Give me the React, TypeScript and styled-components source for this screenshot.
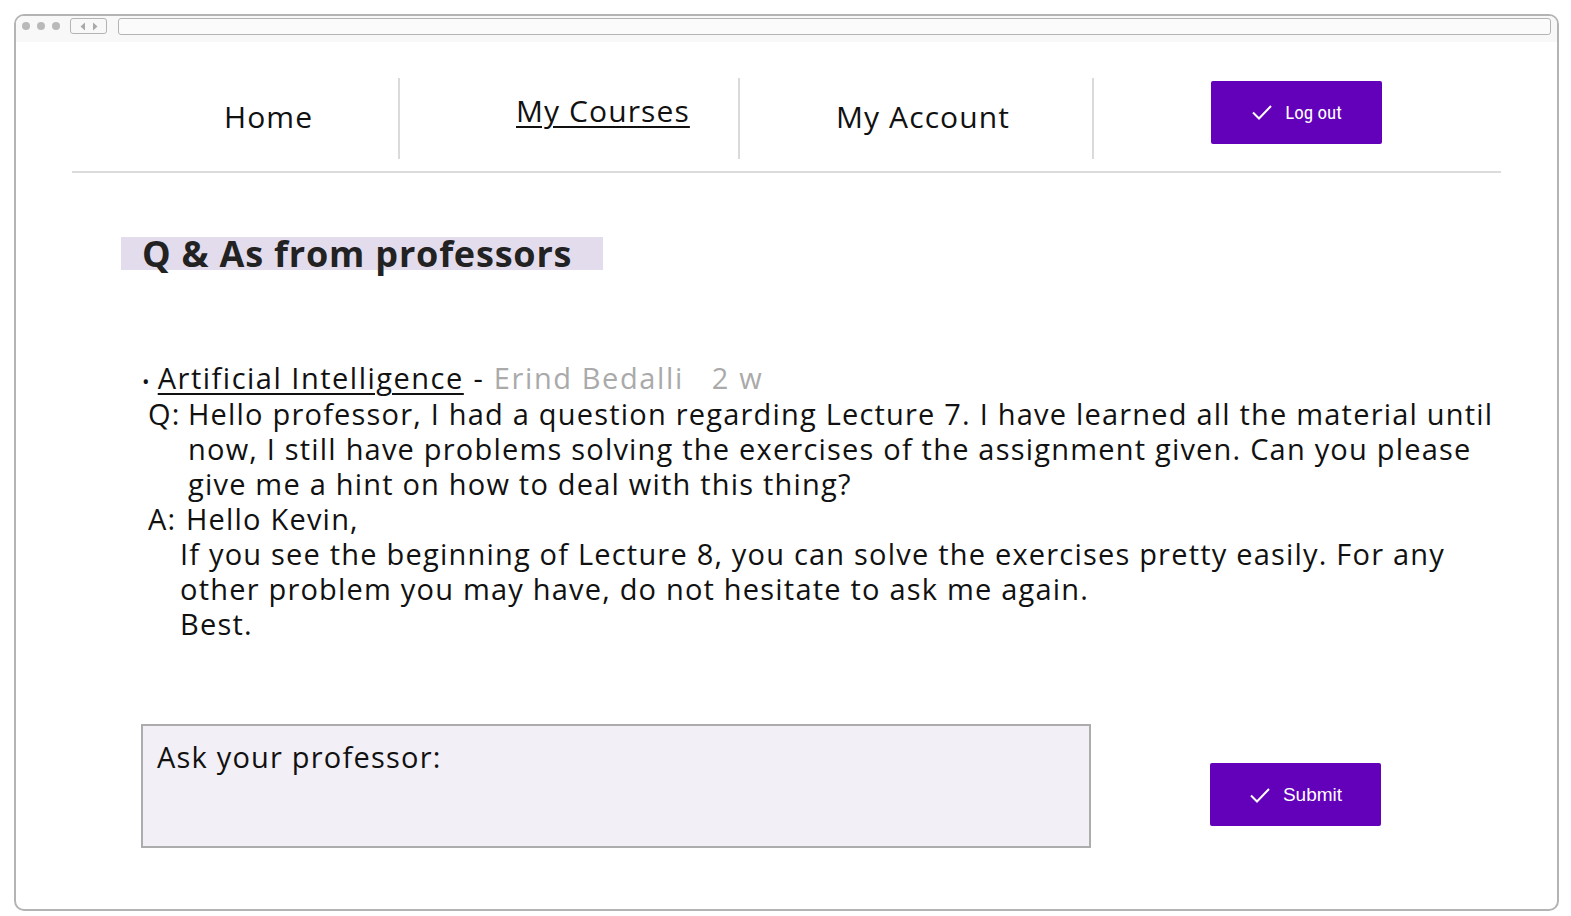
import React from "react";
import styled, { createGlobalStyle } from "styled-components";

const Global = createGlobalStyle`
  html, body { margin: 0; padding: 0; background: #ffffff; }
  body { font-family: "Open Sans", "Noto Sans", sans-serif; color: #111; }
  * { box-sizing: border-box; }
`;

const Frame = styled.div`
  margin: 14px 0 0 14px;
  width: 1545px;
  height: 897px;
  border: 2px solid #b4b4b4;
  border-radius: 10px;
  overflow: hidden;
  display: flex;
  flex-direction: column;
`;

const TopBar = styled.div`
  height: 26px;
  background: #f8f8f8;
  display: flex;
  align-items: center;
  padding: 0 6px 6px 6px;
`;

const Dots = styled.div`
  display: flex;
  gap: 7px;
  margin-right: 10px;
`;

const Dot = styled.span`
  width: 8px;
  height: 8px;
  border-radius: 50%;
  background: #b9b9b9;
`;

const NavArrows = styled.div`
  width: 37px;
  height: 16px;
  border: 1.5px solid #b4b4b4;
  border-radius: 3px;
  display: flex;
  align-items: center;
  justify-content: center;
  gap: 6px;
  margin-right: 11px;
`;

const AddressBar = styled.div`
  flex: 1;
  height: 17px;
  border: 1.5px solid #b4b4b4;
  border-radius: 3px;
  background: #fbfbfb;
`;

const Content = styled.div`
  flex: 1;
  padding: 0 56px;
  display: flex;
  flex-direction: column;
`;

const Nav = styled.nav`
  display: flex;
  height: 131px;
  padding-top: 36px;
  border-bottom: 2px solid #dcdcdc;
`;

const NavItem = styled.div<{ $w: number; $pl: number; $divider?: boolean }>`
  width: ${(p) => p.$w}px;
  height: 81px;
  display: flex;
  align-items: center;
  padding-left: ${(p) => p.$pl}px;
  border-right: ${(p) => (p.$divider ? "2px solid #dadada" : "none")};
`;

const NavLink = styled.a<{ $active?: boolean; $dy?: number }>`
  font-family: "Open Sans", sans-serif;
  font-size: 30px;
  font-weight: 500;
  letter-spacing: 1.1px;
  color: #111;
  text-decoration: ${(p) => (p.$active ? "underline" : "none")};
  text-underline-offset: 4px;
  text-decoration-thickness: 2px;
  position: relative;
  top: ${(p) => p.$dy ?? 0}px;
`;

const PurpleButton = styled.button<{ $font?: string }>`
  width: 171px;
  height: 63px;
  background: #6200ba;
  color: #fff;
  border: none;
  border-radius: 2px;
  display: flex;
  align-items: center;
  justify-content: center;
  gap: 12px;
  font-family: ${(p) => p.$font ?? '"Liberation Sans", sans-serif'};
  font-size: 19px;
  cursor: pointer;
`;

const HeadingRow = styled.div`
  margin-top: 64px;
  padding-left: 49px;
`;

const Heading = styled.h1`
  display: inline-block;
  margin: 0;
  width: 482px;
  height: 33px;
  background: #e3dcec;
  padding-left: 21px;
  font-family: "Open Sans", sans-serif;
  font-weight: 700;
  font-size: 36px;
  letter-spacing: 0.8px;
  line-height: 33px;
  color: #222;
  white-space: nowrap;
`;

const Post = styled.div`
  margin-top: 88px;
  padding-left: 70px;
  font-size: 29px;
  line-height: 35px;
  font-weight: 500;
  letter-spacing: 1.2px;
  white-space: nowrap;
`;

const MetaLine = styled.div`
  display: flex;
  align-items: baseline;
  height: 36px;
`;

const Bullet = styled.span`
  font-size: 20px;
  line-height: 1;
  margin-right: 7px;
`;

const Course = styled.a`
  color: #111;
  text-decoration: underline;
  text-underline-offset: 4px;
  text-decoration-thickness: 2px;
  letter-spacing: 1.5px;
`;

const Muted = styled.span<{ $ml?: number }>`
  color: #aaaaaa;
  margin-left: ${(p) => p.$ml ?? 0}px;
  letter-spacing: 1.6px;
`;

const Dash = styled.span`
  margin: 0 1px;
`;

const QA = styled.div`
  display: flex;
  padding-left: 6px;
`;

const Label = styled.span<{ $w: number }>`
  flex: none;
  width: ${(p) => p.$w}px;
`;

const Body = styled.div`
  flex: 1;
`;

const AnswerBody = styled.div`
  padding-left: 38px;
`;

const AskRow = styled.div`
  margin-top: 83px;
  padding-left: 69px;
  display: flex;
  align-items: center;
`;

const AskBox = styled.div`
  width: 950px;
  height: 124px;
  background: #f2eff6;
  border: 2px solid #acacac;
  padding: 11px 14px;
  font-size: 29px;
  font-weight: 500;
  letter-spacing: 1.2px;
`;

const SubmitWrap = styled.div`
  margin-left: 119px;
  margin-top: 17px;
`;

const Check = () => (
  <svg width="22" height="18" viewBox="0 0 22 18" fill="none">
    <path d="M2 9.5 L8 15.5 L20 3" stroke="#fff" strokeWidth="2" />
  </svg>
);

const Arrow = ({ dir }: { dir: "l" | "r" }) => (
  <svg width="6" height="9" viewBox="0 0 6 9">
    {dir === "l" ? <path d="M5 0.5 L0.5 4.5 L5 8.5 Z" fill="#a9a9a9" /> : <path d="M1 0.5 L5.5 4.5 L1 8.5 Z" fill="#a9a9a9" />}
  </svg>
);

export default function App() {
  return (
    <>
      <Global />
      <Frame>
        <TopBar>
          <Dots>
            <Dot />
            <Dot />
            <Dot />
          </Dots>
          <NavArrows>
            <Arrow dir="l" />
            <Arrow dir="r" />
          </NavArrows>
          <AddressBar />
        </TopBar>
        <Content>
          <Nav>
            <NavItem $w={328} $pl={152} $divider>
              <NavLink $dy={-2}>Home</NavLink>
            </NavItem>
            <NavItem $w={340} $pl={116} $divider>
              <NavLink $active $dy={-8}>My Courses</NavLink>
            </NavItem>
            <NavItem $w={354} $pl={96} $divider>
              <NavLink $dy={-2}>My Account</NavLink>
            </NavItem>
            <NavItem $w={403} $pl={117}>
              <PurpleButton $font='"Roboto Condensed", "Roboto", sans-serif' style={{ marginTop: -13 }}>
                <Check />
                Log out
              </PurpleButton>
            </NavItem>
          </Nav>
          <HeadingRow>
            <Heading>Q &amp; As from professors</Heading>
          </HeadingRow>
          <Post>
            <MetaLine>
              <Bullet>•</Bullet>
              <Course>Artificial Intelligence</Course>
              <Dash>&nbsp;-&nbsp;</Dash>
              <Muted>Erind Bedalli</Muted>
              <Muted $ml={28}>2 w</Muted>
            </MetaLine>
            <QA>
              <Label $w={40}>Q:</Label>
              <Body>
                Hello professor, I had a question regarding Lecture 7. I have learned all the material until
                <br />
                now, I still have problems solving the exercises of the assignment given. Can you please
                <br />
                give me a hint on how to deal with this thing?
              </Body>
            </QA>
            <QA>
              <Label $w={38}>A:</Label>
              <Body>Hello Kevin,</Body>
            </QA>
            <AnswerBody>
              If you see the beginning of Lecture 8, you can solve the exercises pretty easily. For any
              <br />
              other problem you may have, do not hesitate to ask me again.
              <br />
              Best.
            </AnswerBody>
          </Post>
          <AskRow>
            <AskBox>Ask your professor:</AskBox>
            <SubmitWrap>
              <PurpleButton>
                <Check />
                Submit
              </PurpleButton>
            </SubmitWrap>
          </AskRow>
        </Content>
      </Frame>
    </>
  );
}
